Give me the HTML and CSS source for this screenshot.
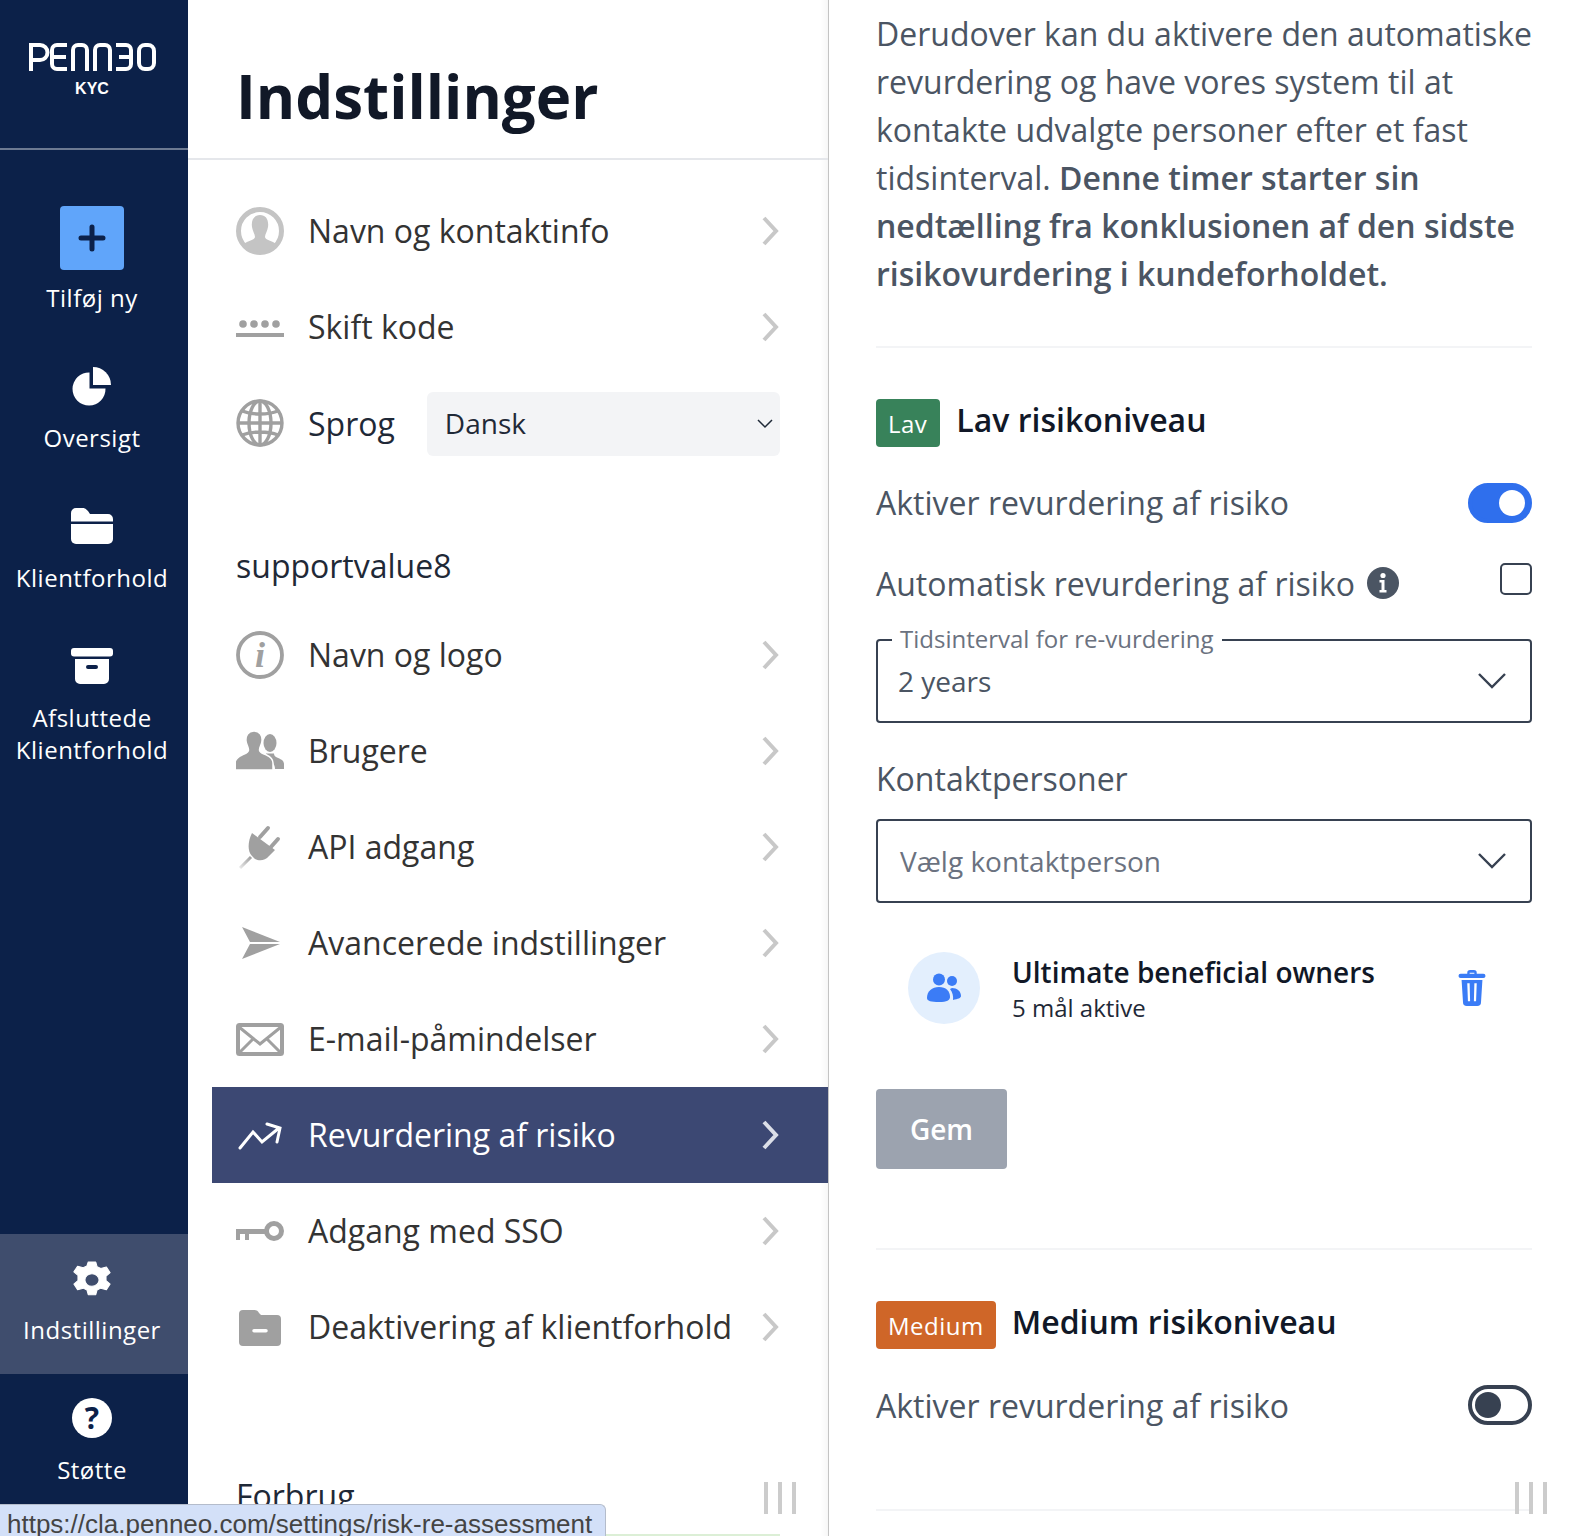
FILE: index.html
```html
<!DOCTYPE html>
<html lang="en">

<head>
    <meta charset="UTF-8">
    <meta name="viewport" content="width=device-width, initial-scale=1.0">
    <title>Indstillinger</title>
    <link rel="stylesheet" href="styles.css">
</head>

<body>
    <div class="app">
        <nav class="sidebar">
            <div class="logo">
                <svg class="logo-mark" viewBox="0 0 127 28" role="img" aria-label="Penneo">
                    <g fill="none" stroke="#fff" stroke-width="4">
                        <path d="M2 28V2h9a7.500 7.500 0 0 1 0 15H2"/>
                        <path d="M38 2H28a5 5 0 0 0-5 5v14a5 5 0 0 0 5 5h10M23 14h14"/>
                        <path d="M44 28V7a5 5 0 0 1 5-5h4a5 5 0 0 1 5 5v21"/>
                        <path d="M66 28V7a5 5 0 0 1 5-5h5a5 5 0 0 1 5 5v21"/>
                        <path d="M87 2h10a5 5 0 0 1 5 5v14a5 5 0 0 1-5 5H87M90 14h12"/>
                        <rect x="110" y="2" width="15" height="24" rx="6"/>
                    </g>
                </svg>
                <span class="logo-sub">KYC</span>
            </div>
            <div class="side-items">
                <a class="side-item side-add">
                    <span class="add-box">
                        <svg width="28" height="28" viewBox="0 0 28 28"><path d="M14 3v22M3 14h22" stroke="#0c2149" stroke-width="5" stroke-linecap="round" fill="none"/></svg>
                    </span>
                    <span>Tilføj ny</span>
                </a>
                <a class="side-item">
                    <svg class="side-icon" viewBox="0 0 40 40"><path d="M17.500 6.500v16h16A16.500 16.500 0 1 1 17.500 6.500z" fill="#fff"/><path d="M21 1A18 18 0 0 1 39 19H21z" fill="#fff"/></svg>
                    <span>Oversigt</span>
                </a>
                <a class="side-item">
                    <svg class="side-icon" viewBox="0 0 42 36"><path d="M0 5a5 5 0 0 1 5-5h6c3 0 4 1 6 3l2 3h18a5 5 0 0 1 5 5v2.500H0z" fill="#fff"/><path d="M0 16h42v15a5 5 0 0 1-5 5H5a5 5 0 0 1-5-5z" fill="#fff"/></svg>
                    <span>Klientforhold</span>
                </a>
                <a class="side-item">
                    <svg class="side-icon" viewBox="0 0 42 36"><rect y="0" width="42" height="8.500" rx="3" fill="#fff"/><path fill-rule="evenodd" d="M4 11h34v20a5 5 0 0 1-5 5H9a5 5 0 0 1-5-5zM17 17a2 2 0 0 0 0 4h8a2 2 0 0 0 0-4z" fill="#fff"/></svg>
                    <span>Afsluttede<br>Klientforhold</span>
                </a>
            </div>
            <div class="side-bottom">
                <a class="side-item side-active">
                    <svg class="side-icon" viewBox="0 0 24 24"><path fill="#fff" fill-rule="evenodd" stroke="#fff" stroke-width=".6" stroke-linejoin="round" transform="translate(12 12) scale(1.120 1) translate(-12 -12)" d="M10 1.200h4l.7 2.800 2 1.100 3-.9 2 3.400-2.200 2.100v2.600l2.200 2.100-2 3.400-3-.9-2 1.100-.7 2.800h-4l-.7-2.800-2-1.100-3 .9-2-3.400 2.200-2.100V9.200L2.300 7.100l2-3.400 3 .9 2-1.100zM12 8.200a3.800 3.800 0 1 0 0 7.600 3.800 3.800 0 0 0 0-7.600z"/></svg>
                    <span>Indstillinger</span>
                </a>
                <a class="side-item side-help">
                    <span class="help-circle">?</span>
                    <span>Støtte</span>
                </a>
            </div>
        </nav>

        <section class="menu">
            <h1 class="menu-title">Indstillinger</h1>
            <ul class="menu-list">
                <li class="menu-row">
                    <svg class="menu-icon" viewBox="0 0 48 48"><circle cx="24" cy="24" r="21.500" fill="none" stroke="#c4c4c4" stroke-width="5"/><path d="M24 8c6 0 9 5 8 12-.5 4-3 7-3 10 0 3 8 4 11 7a20 20 0 0 1-32 0c3-3 11-4 11-7 0-3-2.500-6-3-10-1-7 2-12 8-12z" fill="#c4c4c4"/></svg>
                    <span class="menu-label">Navn og kontaktinfo</span>
                    <svg class="chev" viewBox="0 0 18 30"><path d="M3 2l12 13L3 28" /></svg>
                </li>
                <li class="menu-row">
                    <svg class="menu-icon" viewBox="0 0 48 48"><g fill="#a0a0a0"><circle cx="7" cy="21" r="3.800"/><circle cx="18" cy="21" r="3.800"/><circle cx="29" cy="21" r="3.800"/><circle cx="40" cy="21" r="3.800"/><rect y="30" width="48" height="4"/></g></svg>
                    <span class="menu-label">Skift kode</span>
                    <svg class="chev" viewBox="0 0 18 30"><path d="M3 2l12 13L3 28" /></svg>
                </li>
                <li class="menu-row">
                    <svg class="menu-icon" viewBox="0 0 48 48"><g fill="none" stroke="#a0a0a0" stroke-width="3.400"><circle cx="24" cy="24" r="22"/><ellipse cx="24" cy="24" rx="11" ry="22"/><path d="M24 2v44M2 24h44M6 12c10 4 26 4 36 0M6 36c10-4 26-4 36 0"/></g></svg>
                    <span class="menu-label menu-label-dark">Sprog</span>
                    <div class="lang-select">
                        <span>Dansk</span>
                        <svg width="18" height="18" viewBox="0 0 18 18"><path d="M2 6l7 7 7-7" fill="none" stroke="#1f2937" stroke-width="1.500"/></svg>
                    </div>
                </li>
            </ul>

            <h2 class="menu-heading">supportvalue8</h2>
            <ul class="menu-list">
                <li class="menu-row">
                    <svg class="menu-icon" viewBox="0 0 48 48"><circle cx="24" cy="24" r="22" fill="none" stroke="#a0a0a0" stroke-width="3.800"/><text x="24" y="36" text-anchor="middle" class="info-i">i</text></svg>
                    <span class="menu-label">Navn og logo</span>
                    <svg class="chev" viewBox="0 0 18 30"><path d="M3 2l12 13L3 28" /></svg>
                </li>
                <li class="menu-row">
                    <svg class="menu-icon" viewBox="0 0 48 48"><ellipse cx="34" cy="16" rx="6.500" ry="9" fill="#a0a0a0"/><path d="M48 42v-5c0-4-4-5-7-6.500-2-1-3-2-3-4h-8c0 2-1 3-2 4l8 5c2 1.500 3 3.500 3 6.500z" fill="#a0a0a0"/><g fill="#a0a0a0" stroke="#fff" stroke-width="1.500"><path d="M18 4c6 0 8.500 4.500 8 10-.4 4-2.500 6-2.500 9 0 3 4 3.500 7 5 4 2 6.500 4 6.500 8v7H-1v-7c0-4 3-6 7-8 3-1.500 6.500-2 6.500-5 0-3-2-5-2.500-9C9.500 8.500 12 4 18 4z"/></g></svg>
                    <span class="menu-label">Brugere</span>
                    <svg class="chev" viewBox="0 0 18 30"><path d="M3 2l12 13L3 28" /></svg>
                </li>
                <li class="menu-row">
                    <svg class="menu-icon" viewBox="0 0 48 48"><defs><linearGradient id="cord" x1="1" y1="0" x2="0" y2="1"><stop offset="0" stop-color="#a0a0a0"/><stop offset="1" stop-color="#e8e8e8"/></linearGradient></defs><path d="M4 45l11-11" stroke="url(#cord)" stroke-width="3" fill="none"/><path d="M16 10L39 27l-6 6c-4 5-10 5-14 3l-3-3c-5-5-4-15 0-23z" fill="#a0a0a0"/><path d="M24 14l8-9M34 25l8-9" stroke="#a0a0a0" stroke-width="4" stroke-linecap="round"/></svg>
                    <span class="menu-label">API adgang</span>
                    <svg class="chev" viewBox="0 0 18 30"><path d="M3 2l12 13L3 28" /></svg>
                </li>
                <li class="menu-row">
                    <svg class="menu-icon" viewBox="0 0 48 48"><path d="M6 8l38 15H14z" fill="#a0a0a0"/><path d="M14 25h30L6 40z" fill="#a0a0a0"/></svg>
                    <span class="menu-label">Avancerede indstillinger</span>
                    <svg class="chev" viewBox="0 0 18 30"><path d="M3 2l12 13L3 28" /></svg>
                </li>
                <li class="menu-row">
                    <svg class="menu-icon" viewBox="0 0 48 48"><rect x="2" y="10" width="44" height="29" rx="1.500" fill="none" stroke="#a0a0a0" stroke-width="4"/><path d="M3 12l21 17 21-17M4 37l13-13M44 37L31 24" fill="none" stroke="#a0a0a0" stroke-width="3"/></svg>
                    <span class="menu-label">E-mail-påmindelser</span>
                    <svg class="chev" viewBox="0 0 18 30"><path d="M3 2l12 13L3 28" /></svg>
                </li>
                <li class="menu-row menu-row-active">
                    <svg class="menu-icon" viewBox="0 0 48 48"><path d="M4 37l13-16 9 10 17-14M31 13l13 4-3 14" fill="none" stroke="#fff" stroke-width="3" stroke-linecap="round"/></svg>
                    <span class="menu-label">Revurdering af risiko</span>
                    <svg class="chev" viewBox="0 0 18 30"><path d="M3 2l12 13L3 28" /></svg>
                </li>
                <li class="menu-row">
                    <svg class="menu-icon" viewBox="0 0 48 48"><g fill="#a0a0a0"><path d="M0 22h30v5H13v6H9v-6H4v6H0z"/></g><circle cx="38" cy="24" r="7.500" fill="none" stroke="#a0a0a0" stroke-width="5"/></svg>
                    <span class="menu-label">Adgang med SSO</span>
                    <svg class="chev" viewBox="0 0 18 30"><path d="M3 2l12 13L3 28" /></svg>
                </li>
                <li class="menu-row">
                    <svg class="menu-icon" viewBox="0 0 48 48"><path fill="#a0a0a0" fill-rule="evenodd" d="M3 11a4 4 0 0 1 4-4h11c3 0 4 1 5 3l2 2h16a4 4 0 0 1 4 4v23a4 4 0 0 1-4 4H7a4 4 0 0 1-4-4zM18 26a1.500 1.500 0 0 0 0 3.500h12a1.500 1.500 0 0 0 0-3.500z"/></svg>
                    <span class="menu-label">Deaktivering af klientforhold</span>
                    <svg class="chev" viewBox="0 0 18 30"><path d="M3 2l12 13L3 28" /></svg>
                </li>
            </ul>
            <h2 class="menu-heading usage">Forbrug</h2>
            <span class="usage-bar"></span>
            <span class="grip grip-menu"><i></i><i></i><i></i></span>
        </section>

        <main class="detail">
            <p class="intro">Derudover kan du aktivere den automatiske revurdering og have vores system til at kontakte udvalgte personer efter et fast tidsinterval. <b>Denne timer starter sin nedtælling fra konklusionen af den sidste risikovurdering i kundeforholdet.</b></p>
            <hr class="rule">

            <div class="level">
                <span class="badge badge-low">Lav</span>
                <h3 class="level-title">Lav risikoniveau</h3>
            </div>
            <div class="field-row">
                <span class="row-label">Aktiver revurdering af risiko</span>
                <span class="toggle toggle-on"></span>
            </div>
            <div class="field-row">
                <span class="auto-label">Automatisk revurdering af risiko
                    <svg width="32" height="32" viewBox="0 0 32 32"><circle cx="16" cy="16" r="16" fill="#4b5563"/><circle cx="16" cy="8.500" r="2.600" fill="#fff"/><path d="M12.500 13h5v10h2v2.500h-7V23h2v-7.500h-2z" fill="#fff"/></svg>
                </span>
                <span class="checkbox"></span>
            </div>
            <fieldset class="select select-legend">
                <legend>Tidsinterval for re-vurdering</legend>
                <span>2 years</span>
                <svg class="select-arrow" viewBox="0 0 30 18"><path d="M2 2l13 13L28 2"/></svg>
            </fieldset>
            <div class="contacts-label">Kontaktpersoner</div>
            <div class="select select-plain">
                <span class="placeholder">Vælg kontaktperson</span>
                <svg class="select-arrow" viewBox="0 0 30 18"><path d="M2 2l13 13L28 2"/></svg>
            </div>
            <div class="contact">
                <span class="contact-avatar">
                    <svg width="36" height="32" viewBox="0 0 36 32"><g fill="#3b7cf6"><circle cx="13" cy="7.500" r="6"/><circle cx="26" cy="9" r="5"/><path d="M1 26c0-7 5-11 12-11s11 4 11 10c0 3-3 5-11 5S1 29 1 26z"/><path d="M26 16c5 0 9 3 9 8 0 2-3 3-8 4 .5-4-.5-8-3-11z"/></g></svg>
                </span>
                <div class="contact-text">
                    <div class="contact-name">Ultimate beneficial owners</div>
                    <div class="contact-sub">5 mål aktive</div>
                </div>
                <svg class="trash" viewBox="0 0 28 38"><path fill="#3b7cf6" fill-rule="evenodd" d="M9 3a3 3 0 0 1 3-3h4a3 3 0 0 1 3 3v1h7a2 2 0 0 1 0 4.500H2A2 2 0 0 1 2 4h7zm2.500 0v1h5V3zM3 10.500h22L23.500 34a4 4 0 0 1-4 4h-11a4 4 0 0 1-4-4zM9 14l.7 19h2.300L11.500 14zm7.500 0L16 33h2.300L19 14z"/></svg>
            </div>
            <button class="save">Gem</button>
            <hr class="rule rule-second">

            <div class="level">
                <span class="badge badge-mid">Medium</span>
                <h3 class="level-title">Medium risikoniveau</h3>
            </div>
            <div class="field-row">
                <span>Aktiver revurdering af risiko</span>
                <span class="toggle"></span>
            </div>
            <hr class="rule rule-third">
            <span class="grip grip-detail"><i></i><i></i><i></i></span>
        </main>
    </div>
    <div class="status">https://cla.penneo.com/settings/risk-re-assessment</div>
</body>

</html>
```

FILE: styles.css
```css
* {
    box-sizing: border-box;
    margin: 0;
    padding: 0;
}

body {
    width: 1570px;
    height: 1536px;
    overflow: hidden;
    position: relative;
    background: #fff;
    font-family: "Open Sans", "Noto Sans", sans-serif;
}

.app {
    display: flex;
    height: 1536px;
}

/* left nav */
.sidebar {
    width: 188px;
    flex: none;
    background: #0c2149;
    color: #fff;
    display: flex;
    flex-direction: column;
    font-size: 24px;
    font-weight: 500;
    letter-spacing: 0.5px;
}

.logo {
    height: 150px;
    border-bottom: 2px solid #6d7a92;
    display: flex;
    flex-direction: column;
    align-items: center;
    padding: 43px 4px 0 0;
}

.logo-mark {
    width: 127px;
    height: 28px;
    flex: none;
}

.logo-sub {
    font-family: "Liberation Sans", sans-serif;
    font-size: 16px;
    font-weight: 700;
    line-height: 18px;
    letter-spacing: 0;
    margin-top: 9px;
}

.side-items {
    padding-top: 56px;
    flex: 1;
}

.side-item {
    display: flex;
    flex-direction: column;
    align-items: center;
    text-align: center;
    line-height: 32px;
    height: 140px;
    gap: 16px;
    padding: 6px 4px 0 0;
}

.side-add {
    padding-top: 0;
    height: 154px;
    gap: 12px;
}

.add-box {
    width: 64px;
    height: 64px;
    border-radius: 4px;
    background: #60a5fa;
    display: flex;
    align-items: center;
    justify-content: center;
}

.side-icon {
    width: 42px;
    height: 40px;
    flex: none;
}

.side-bottom {
    padding-bottom: 22px;
}

.side-active {
    background: #3f4d6d;
    padding-top: 26px;
    gap: 14px;
}

.side-help {
    padding-top: 24px;
    gap: 16px;
}

.help-circle {
    width: 40px;
    height: 40px;
    border-radius: 50%;
    background: #fff;
    color: #0c2149;
    font-size: 30px;
    line-height: 40px;
    font-weight: 700;
    letter-spacing: 0;
}

/* settings list */
.menu {
    width: 640px;
    flex: none;
    position: relative;
    box-shadow: 1px 0 0 #c4c4c4, inset -10px 0 10px -10px rgba(0, 0, 0, 0.07);
    padding-left: 24px;
    z-index: 1;
    background: #fff;
}

.menu-title {
    margin-left: -24px;
    padding: 58px 0 0 48px;
    height: 160px;
    border-bottom: 2px solid #e5e7eb;
    font-size: 60px;
    line-height: 76px;
    font-weight: 700;
    color: #111827;
}

.menu-list {
    list-style: none;
}

.menu-list:first-of-type {
    padding-top: 23px;
}

.menu-row {
    height: 96px;
    display: flex;
    align-items: center;
    padding: 0 48px 0 24px;
    color: #333;
    font-size: 32px;
}

.menu-row-active {
    background: #3c4873;
    color: #fff;
}

.menu-row-active .chev path {
    stroke: #dcdfe8;
}

.menu-icon {
    width: 48px;
    height: 48px;
    flex: none;
    margin-right: 24px;
}

.menu-label {
    flex: 1;
    white-space: nowrap;
    margin-bottom: 2px;
}

.menu-label-dark {
    flex: none;
    color: #1f2937;
    margin: 0 32px 0 0;
}

.info-i {
    font-family: "Liberation Serif", serif;
    font-style: italic;
    font-weight: 700;
    font-size: 36px;
    fill: #a0a0a0;
}

.chev {
    width: 18px;
    height: 30px;
    flex: none;
    margin-right: 1px;
}

.chev path {
    fill: none;
    stroke: #c8c8c8;
    stroke-width: 4;
}

.lang-select {
    flex: 1;
    height: 64px;
    margin-top: 2px;
    background: #f3f4f6;
    border-radius: 6px;
    display: flex;
    align-items: center;
    justify-content: space-between;
    padding: 0 6px 2px 18px;
    font-size: 28px;
    color: #1f2937;
}

.menu-heading {
    margin: 71px 0 17px 24px;
    font-size: 32px;
    line-height: 48px;
    font-weight: 400;
    color: #1f2937;
}

.usage {
    margin-top: 97px;
}

.usage-bar {
    position: absolute;
    left: 48px;
    right: 48px;
    top: 1534px;
    height: 2px;
    background: #dcefd6;
}

.grip {
    position: absolute;
    display: flex;
    gap: 10px;
}

.grip i {
    width: 4px;
    height: 32px;
    background: #cccccc;
}

.grip-menu {
    right: 32px;
    top: 1482px;
}

.grip-detail {
    right: 23px;
    top: 1482px;
}

/* right detail column */
.detail {
    flex: 1;
    position: relative;
    padding: 10px 38px 0 48px;
    color: #4b5563;
    font-size: 32px;
}

.intro {
    line-height: 48px;
    font-size: 32px;
}

.intro b {
    font-weight: 600;
}

.rule {
    border: 0;
    height: 2px;
    background: #f3f4f6;
    margin-top: 48px;
}

.rule-second {
    margin-top: 79px;
}

.rule-third {
    margin-top: 80px;
}

.level {
    display: flex;
    align-items: flex-start;
    gap: 16px;
    margin-top: 51px;
}

.badge {
    height: 48px;
    border-radius: 4px;
    padding: 0 12px;
    font-size: 24px;
    line-height: 50px;
    letter-spacing: 0.5px;
    color: #fff;
}

.badge-low {
    background: #38825a;
    padding-right: 13px;
}

.badge-mid {
    background: #cf6628;
}

.level-title {
    font-size: 32px;
    line-height: 42px;
    font-weight: 600;
    color: #111827;
}

.field-row {
    display: flex;
    justify-content: space-between;
    align-items: center;
    height: 48px;
    margin-top: 32px;
}

.row-label {
    margin-bottom: 2px;
}

.auto-label {
    display: flex;
    align-items: center;
    gap: 12px;
}

.toggle {
    width: 64px;
    height: 40px;
    border-radius: 20px;
    border: 4px solid #374151;
    display: flex;
    align-items: center;
    padding-left: 3px;
}

.toggle::before {
    content: "";
    width: 26px;
    height: 26px;
    border-radius: 50%;
    background: #374151;
}

.toggle-on {
    background: #2f6fed;
    border-color: #2f6fed;
    justify-content: flex-end;
    padding: 0 3px 0 0;
}

.toggle-on::before {
    background: #fff;
}

.checkbox {
    width: 32px;
    height: 32px;
    border: 2px solid #374151;
    border-radius: 5px;
    margin-top: -8px;
}

.select {
    position: relative;
    height: 84px;
    border: 2px solid #374151;
    border-radius: 4px;
    display: flex;
    align-items: center;
    padding: 0 20px;
    font-size: 28px;
}

.select-legend {
    display: block;
    height: 96px;
    margin-top: 20px;
    line-height: 56px;
}

.select legend {
    margin-left: -6px;
    padding: 0 8px 2px;
    font-size: 24px;
    line-height: 24px;
    color: #6b7280;
}

.select-arrow {
    position: absolute;
    right: 23px;
    bottom: 31px;
    width: 30px;
    height: 18px;
}

.select-arrow path {
    fill: none;
    stroke: #374151;
    stroke-width: 2.400;
}

.placeholder {
    color: #6b7280;
    margin-left: 2px;
}

.contacts-label {
    margin-top: 32px;
    line-height: 48px;
}

.select-plain {
    margin-top: 16px;
}

.contact {
    display: flex;
    align-items: center;
    margin-top: 46px;
    padding-left: 32px;
}

.contact-avatar {
    width: 72px;
    height: 72px;
    border-radius: 50%;
    background: #e3effd;
    display: flex;
    align-items: center;
    justify-content: center;
    margin-right: 32px;
}

.contact-text {
    flex: 1;
    color: #111827;
    padding-top: 5px;
}

.contact-name {
    font-size: 28px;
    line-height: 36px;
    font-weight: 600;
}

.contact-sub {
    font-size: 24px;
    line-height: 36px;
    color: #1f2937;
}

.trash {
    width: 28px;
    height: 36px;
    margin-right: 46px;
}

.save {
    display: block;
    width: 131px;
    height: 80px;
    margin-top: 63px;
    border: 0;
    border-radius: 4px;
    background: #9ca3af;
    color: #fff;
    font-family: inherit;
    font-size: 28px;
    font-weight: 600;
}

/* browser link preview */
.status {
    position: absolute;
    left: 0;
    bottom: 0;
    width: 606px;
    height: 32px;
    background: #d3e0f8;
    border: 1px solid #b4bccb;
    border-left: 0;
    border-bottom: 0;
    border-top-right-radius: 6px;
    padding-left: 7px;
    font-family: "Liberation Sans", sans-serif;
    font-size: 26px;
    line-height: 39px;
    color: #444;
    white-space: nowrap;
    overflow: hidden;
    z-index: 3;
}
```
